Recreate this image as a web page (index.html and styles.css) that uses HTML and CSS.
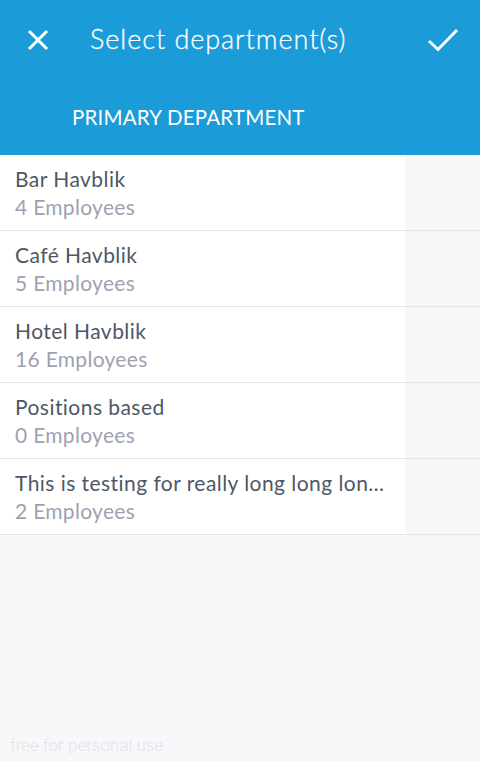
FILE: index.html
```html
<!DOCTYPE html>
<html>
<head>
<meta charset="utf-8">
<link rel="stylesheet" href="styles.css">
</head>
<body>
<div class="app">
  <header class="header">
    <div class="toolbar">
      <button class="icon-btn close" aria-label="Close">
        <svg width="22" height="22" viewBox="0 0 22 22"><path d="M2 2 L20 20 M20 2 L2 20" stroke="#fff" stroke-width="3" fill="none"/></svg>
      </button>
      <h1 class="title">Select department(s)</h1>
      <button class="icon-btn check" aria-label="Done">
        <svg width="32" height="24" viewBox="0 0 32 24"><path d="M2 13 L11 21.5 L30 2" stroke="#fff" stroke-width="3" fill="none"/></svg>
      </button>
    </div>
    <div class="tab">PRIMARY DEPARTMENT</div>
  </header>
  <ul class="list">
    <li class="row"><div class="cell"><div class="name">Bar Havblik</div><div class="count">4 Employees</div></div></li>
    <li class="row"><div class="cell"><div class="name">Café Havblik</div><div class="count">5 Employees</div></div></li>
    <li class="row"><div class="cell"><div class="name">Hotel Havblik</div><div class="count">16 Employees</div></div></li>
    <li class="row"><div class="cell"><div class="name">Positions based</div><div class="count">0 Employees</div></div></li>
    <li class="row"><div class="cell"><div class="name">This is testing for really long long lon…</div><div class="count">2 Employees</div></div></li>
  </ul>
  <div class="watermark">free for personal use</div>
</div>
</body>
</html>
```

FILE: styles.css
```css
* { box-sizing: border-box; }
html, body { margin: 0; padding: 0; }
body {
  background: #f8f8fa;
  font-family: Lato, "Open Sans", sans-serif;
  font-weight: 300;
  width: 480px;
  height: 761px;
  overflow: hidden;
}
.app {
  display: flex;
  flex-direction: column;
  height: 761px;
}
.header {
  background: #1b9bd7;
  height: 155px;
  color: #fff;
  display: flex;
  flex-direction: column;
}
.toolbar {
  display: flex;
  align-items: center;
  height: 80px;
}
.icon-btn {
  background: none;
  border: 0;
  padding: 0;
  display: flex;
  align-items: center;
  justify-content: center;
}
.close {
  width: 22px;
  height: 22px;
  margin-left: 27px;
}
.title {
  margin: 0 0 0 41px;
  font-weight: 300;
  font-size: 27px;
  letter-spacing: 0.95px;
  flex: 1;
  color: #fff;
  line-height: 32px;
  padding-bottom: 2px;
  -webkit-text-stroke: 0.3px #fff;
}
.check {
  width: 32px;
  height: 24px;
  margin-right: 21px;
}
.tab {
  padding-left: 72px;
  margin-top: 25px;
  font-size: 20.5px;
  letter-spacing: 0.2px;
  font-weight: 400;
}
.list {
  list-style: none;
  margin: 0;
  padding: 0;
}
.row {
  height: 76px;
  border-bottom: 1px solid #e3e4e7;
  display: flex;
}
.cell {
  width: 405px;
  height: 75px;
  background: #fff;
  padding: 10px 15px 0 15px;
}
.name {
  font-size: 21px;
  color: #4e5766;
  white-space: nowrap;
  overflow: hidden;
  line-height: 28px;
  letter-spacing: 0.45px;
  font-weight: 400;
}
.count {
  font-size: 21px;
  color: #9da2b2;
  line-height: 28px;
  letter-spacing: 0.3px;
  font-weight: 400;
}
.watermark {
  margin-top: auto;
  padding: 0 0 6px 10px;
  font-family: Roboto, sans-serif;
  font-weight: 300;
  font-size: 17px;
  color: #e2e3e7;
}
```
